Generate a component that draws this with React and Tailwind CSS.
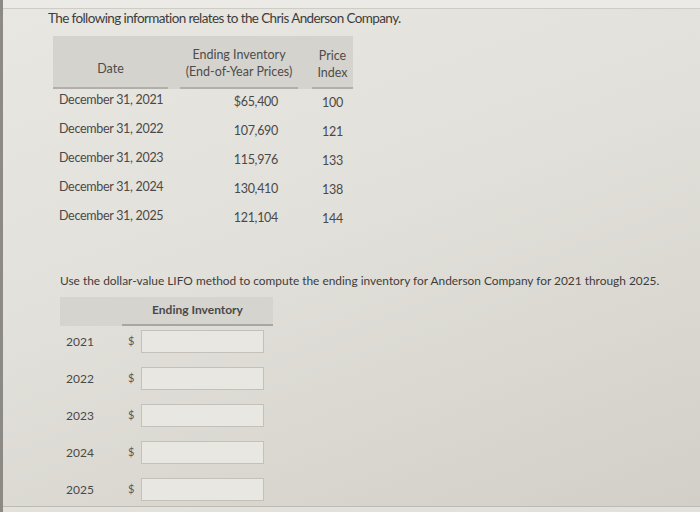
export default function App() {
  const rows = [
    ["December 31, 2021", "$65,400", "100"],
    ["December 31, 2022", "107,690", "121"],
    ["December 31, 2023", "115,976", "133"],
    ["December 31, 2024", "130,410", "138"],
    ["December 31, 2025", "121,104", "144"],
  ];
  const years = ["2021", "2022", "2023", "2024", "2025"];
  return (
    <div
      className="relative w-[700px] h-[512px] overflow-hidden bg-[linear-gradient(160deg,#e9e7e2_0%,#e2e0da_45%,#d2cfc8_100%)] border-l-[3px] border-[#8d8a85] text-[#474645]"
      style={{ fontFamily: "Lato, 'Open Sans', sans-serif" }}
    >
      <div className="h-[9px] border-b border-[#cfccc6] bg-[#ebeae6]" />
      <div className="pl-[45px] pt-[1px] text-[13.5px] leading-[16px] tracking-[-0.6px] text-[#3e3d3c] whitespace-nowrap">
        The following information relates to the Chris Anderson Company.
      </div>

      {/* Table 1 */}
      <div className="ml-[50px] mt-[10px] w-[300px]">
        <div className="flex h-[53px] bg-[#d5d3ce] text-[12.5px] leading-[17px] text-[#4d4c4a]">
          <div className="w-[115px] border-b-[2px] border-[#b2afaa] flex items-end justify-center pb-[10px]">Date</div>
          <div className="w-[12px]" />
          <div className="w-[118px] border-b-[2px] border-[#b2afaa] flex flex-col items-center justify-end pb-[7px]">
            <span>Ending Inventory</span>
            <span>(End-of-Year Prices)</span>
          </div>
          <div className="w-[14px]" />
          <div className="w-[41px] border-b-[2px] border-[#b2afaa] flex flex-col items-center justify-end pb-[6px]">
            <span>Price</span>
            <span>Index</span>
          </div>
        </div>
        <div className="-mt-[3px]">
          {rows.map((r, i) => (
            <div key={i} className="flex h-[29px] items-center text-[12.5px] tracking-[-0.3px] text-[#4a4948] whitespace-nowrap">
              <div className="w-[115px] pl-[6px]">{r[0]}</div>
              <div className="w-[12px]" />
              <div className="w-[118px] text-right pr-[20px] pt-[3px]">{r[1]}</div>
              <div className="w-[14px]" />
              <div className="w-[41px] text-center pt-[5px]">{r[2]}</div>
            </div>
          ))}
        </div>
      </div>

      <div className="pl-[57px] mt-[42px] text-[11.9px] leading-[16px] text-[#3e3d3c] whitespace-nowrap">
        Use the dollar-value LIFO method to compute the ending inventory for Anderson Company for 2021 through 2025.
      </div>

      {/* Table 2 */}
      <div className="ml-[57px] mt-[8px] w-[213px]">
        <div className="flex h-[29px] bg-[#d6d4cf]">
          <div className="w-[62px]" />
          <div className="flex-1 border-b-[2px] border-[#a9a6a1] flex items-center justify-center text-[12px] font-bold text-[#4a4948] pb-[1px]">
            Ending Inventory
          </div>
        </div>
        <div className="pt-[4px] flex flex-col gap-[14px]">
          {years.map((y) => (
            <div key={y} className="flex h-[23px] items-center text-[12px] text-[#4a4948]">
              <div className="w-[68px] pl-[6px]">{y}</div>
              <div className="w-[13px] text-[11px] text-[#5a5957]">$</div>
              <div className="w-[123px] h-[23px] border border-[#c4c1bb] bg-[#e9e7e2]" />
            </div>
          ))}
        </div>
      </div>

      <div className="absolute left-0 right-0 bottom-0 h-[6px] border-t border-[#bebbb5] bg-[#e3e1dc]" />
    </div>
  );
}
